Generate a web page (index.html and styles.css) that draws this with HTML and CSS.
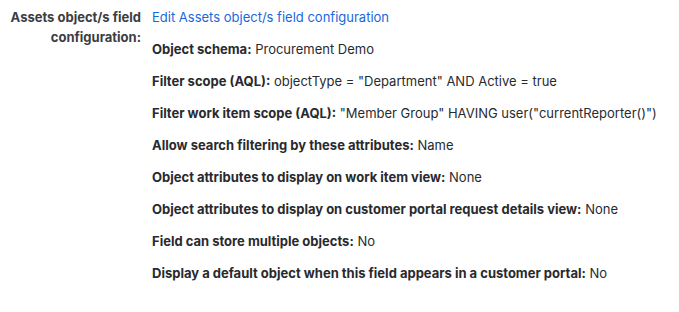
FILE: index.html
```html
<!DOCTYPE html>
<html lang="en">
<head>
  <meta charset="UTF-8">
  <meta name="viewport" content="width=device-width, initial-scale=1.0">
  <title>Assets field configuration</title>
  <link rel="stylesheet" href="styles.css">
</head>
<body>
  <!-- Field configuration row -->
  <div class="field-row">
    <div class="field-label">Assets object/s field<br>configuration:</div>
    <div class="field-value">
      <a class="edit-link" href="#">Edit Assets object/s field configuration</a>
      <div class="config-item"><strong>Object schema:</strong> Procurement Demo</div>
      <div class="config-item"><strong>Filter scope (AQL):</strong> objectType = "Department" AND Active = true</div>
      <div class="config-item"><strong>Filter work item scope (AQL):</strong> "Member Group" HAVING user("currentReporter()")</div>
      <div class="config-item"><strong>Allow search filtering by these attributes:</strong> Name</div>
      <div class="config-item"><strong>Object attributes to display on work item view:</strong> None</div>
      <div class="config-item"><strong>Object attributes to display on customer portal request details view:</strong> None</div>
      <div class="config-item"><strong>Field can store multiple objects:</strong> No</div>
      <div class="config-item"><strong>Display a default object when this field appears in a customer portal:</strong> No</div>
    </div>
  </div>
</body>
</html>
```

FILE: styles.css
```css
body {
  margin: 0;
  padding: 7px 0 0 0;
  background: #ffffff;
  font-family: 'Inter', 'Liberation Sans', sans-serif;
  font-size: 13px;
  line-height: 20px;
  color: #292a2e;
}

.field-row {
  display: grid;
  grid-template-columns: 136px 1fr;
  column-gap: 11px;
  padding-left: 5px;
}

.field-label {
  text-align: right;
  font-weight: 700;
  color: #3b3d42;
}

.field-value {
  display: flex;
  flex-direction: column;
  align-items: flex-start;
}

.edit-link {
  color: #1868db;
  text-decoration: none;
}

.edit-link:hover {
  text-decoration: underline;
}

.config-item {
  margin-top: 12px;
}

.config-item strong {
  font-weight: 700;
}
```
